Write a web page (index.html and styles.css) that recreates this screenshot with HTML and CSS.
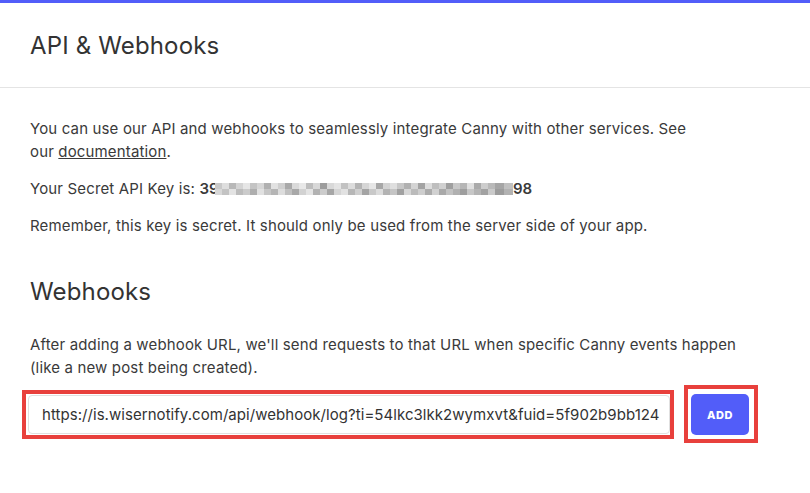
FILE: index.html
```html
<!DOCTYPE html>
<html lang="en">
<head>
    <meta charset="UTF-8">
    <meta name="viewport" content="width=device-width, initial-scale=1.0">
    <title>API &amp; Webhooks</title>
    <link rel="stylesheet" href="styles.css">
</head>
<body>
<div class="top-bar"></div>

<div class="page-header">
    <h1>API &amp; Webhooks</h1>
</div>

<div class="content">
    <p>You can use our API and webhooks to seamlessly integrate Canny with other services. See<br>
        our <a href="#">documentation</a>.</p>
    <p>Your Secret API Key is: <strong class="secret-key">39<span class="key-mask"></span>98</strong></p>
    <p>Remember, this key is secret. It should only be used from the server side of your app.</p>

    <h2>Webhooks</h2>
    <p>After adding a webhook URL, we'll send requests to that URL when specific Canny events happen<br>
        (like a new post being created).</p>

    <div class="webhook-form">
        <div class="input-wrap">
            <input type="text" class="url-input" value="https://is.wisernotify.com/api/webhook/log?ti=54lkc3lkk2wymxvt&amp;fuid=5f902b9bb124">
        </div>
        <div class="btn-wrap">
            <button class="add-btn">ADD</button>
        </div>
    </div>
</div>
</body>
</html>
```

FILE: styles.css
```css
body {
    font-family: Inter, "Noto Sans", sans-serif;
    margin: 0;
    padding: 0;
    background-color: #fff;
    color: #3a3a3a;
    letter-spacing: 0.15px;
}

.top-bar {
    height: 3px;
    background-color: #525df9;
}

.page-header {
    height: 84px;
    padding: 0 30px;
    display: flex;
    align-items: center;
    border-bottom: 1px solid #e4e4e4;
}

h1, h2 {
    margin: 0;
    font-size: 24px;
    font-weight: 400;
    color: #333;
}

.content {
    padding: 29px 30px;
}

p {
    margin: 0 0 14px;
    font-size: 15px;
    line-height: 23px;
}

a {
    color: inherit;
}

.secret-key {
    font-weight: 600;
}

/* pixelated cover over the middle of the key, two rows of cells */
.key-mask {
    display: inline-block;
    width: 298px;
    height: 12px;
    margin: 0 0 -1px -4px;
    vertical-align: baseline;
    background:
        linear-gradient(90deg,
            #c9c9c9 0 7px, #dedede 7px 14px, #b8b8b8 14px 21px, #d4d4d4 21px 28px,
            #e6e6e6 28px 35px, #c4c4c4 35px 42px, #d6d6d6 42px 49px, #b0b0b0 49px 56px,
            #e2e2e2 56px 63px, #cfcfcf 63px 70px, #a9a9a9 70px 77px, #dadada 77px 84px,
            #e8e8e8 84px 91px, #bdbdbd 91px 98px, #d8d8d8 98px 105px, #9d9d9d 105px 112px,
            #d9d9d9 112px 119px, #e4e4e4 119px 126px, #c2c2c2 126px 133px, #dcdcdc 133px 140px,
            #b4b4b4 140px 147px, #d6d6d6 147px 154px, #e6e6e6 154px 161px, #a7a7a7 161px 168px,
            #d3d3d3 168px 175px, #dfdfdf 175px 182px, #c7c7c7 182px 189px, #b1b1b1 189px 196px,
            #d4d4d4 196px 203px, #a3a3a3 203px 210px, #dddddd 210px 217px, #bebebe 217px 224px,
            #d0d0d0 224px 231px, #9f9f9f 231px 238px, #c8c8c8 238px 245px, #b6b6b6 245px 252px,
            #e0e0e0 252px 259px, #aaaaaa 259px 266px, #cdcdcd 266px 273px, #b9b9b9 273px 280px,
            #a5a5a5 280px 289px, #c0c0c0 289px 298px) top / 100% 6px no-repeat,
        linear-gradient(90deg,
            #d8d8d8 0 7px, #c3c3c3 7px 14px, #e3e3e3 14px 21px, #bcbcbc 21px 28px,
            #cbcbcb 28px 35px, #aeaeae 35px 42px, #e1e1e1 42px 49px, #c6c6c6 49px 56px,
            #b5b5b5 56px 63px, #dddddd 63px 70px, #c0c0c0 70px 77px, #a8a8a8 77px 84px,
            #d2d2d2 84px 91px, #e4e4e4 91px 98px, #b2b2b2 98px 105px, #cccccc 105px 112px,
            #a6a6a6 112px 119px, #d5d5d5 119px 126px, #e2e2e2 126px 133px, #b7b7b7 133px 140px,
            #cfcfcf 140px 147px, #a4a4a4 147px 154px, #c9c9c9 154px 161px, #dcdcdc 161px 168px,
            #b3b3b3 168px 175px, #c5c5c5 175px 182px, #a1a1a1 182px 189px, #d7d7d7 189px 196px,
            #bbbbbb 196px 203px, #cecece 203px 210px, #acacac 210px 217px, #d1d1d1 217px 224px,
            #a9a9a9 224px 231px, #c2c2c2 231px 238px, #b0b0b0 238px 245px, #9e9e9e 245px 252px,
            #c7c7c7 252px 259px, #b4b4b4 259px 266px, #a2a2a2 266px 273px, #cacaca 273px 280px,
            #9c9c9c 280px 289px, #b2b2b2 289px 298px) bottom / 100% 6px no-repeat;
}

h2 {
    margin: 40px 0 27px;
}

.webhook-form {
    display: flex;
    align-items: center;
    gap: 10px;
    margin-top: -8px;
    margin-left: -8px;
}

.input-wrap {
    border: 4px solid #e8403c;
    padding: 1px 0 1px 2px;
}

.url-input {
    width: 642px;
    height: 39px;
    box-sizing: border-box;
    padding: 0 6px 0 13px;
    border: 1px solid #e0e0e0;
    border-radius: 4px;
    font-family: Inter, "Noto Sans", sans-serif;
    font-size: 15px;
    letter-spacing: 0.05px;
    color: #333;
    outline: none;
}

.btn-wrap {
    border: 4px solid #e8403c;
    padding: 5px 5px 4px 3px;
}

.add-btn {
    width: 58px;
    height: 41px;
    border: none;
    border-radius: 5px;
    background-color: #525df9;
    color: #fff;
    font-family: Inter, "Noto Sans", sans-serif;
    font-size: 11px;
    font-weight: 800;
    letter-spacing: 0.6px;
    cursor: pointer;
}
```
